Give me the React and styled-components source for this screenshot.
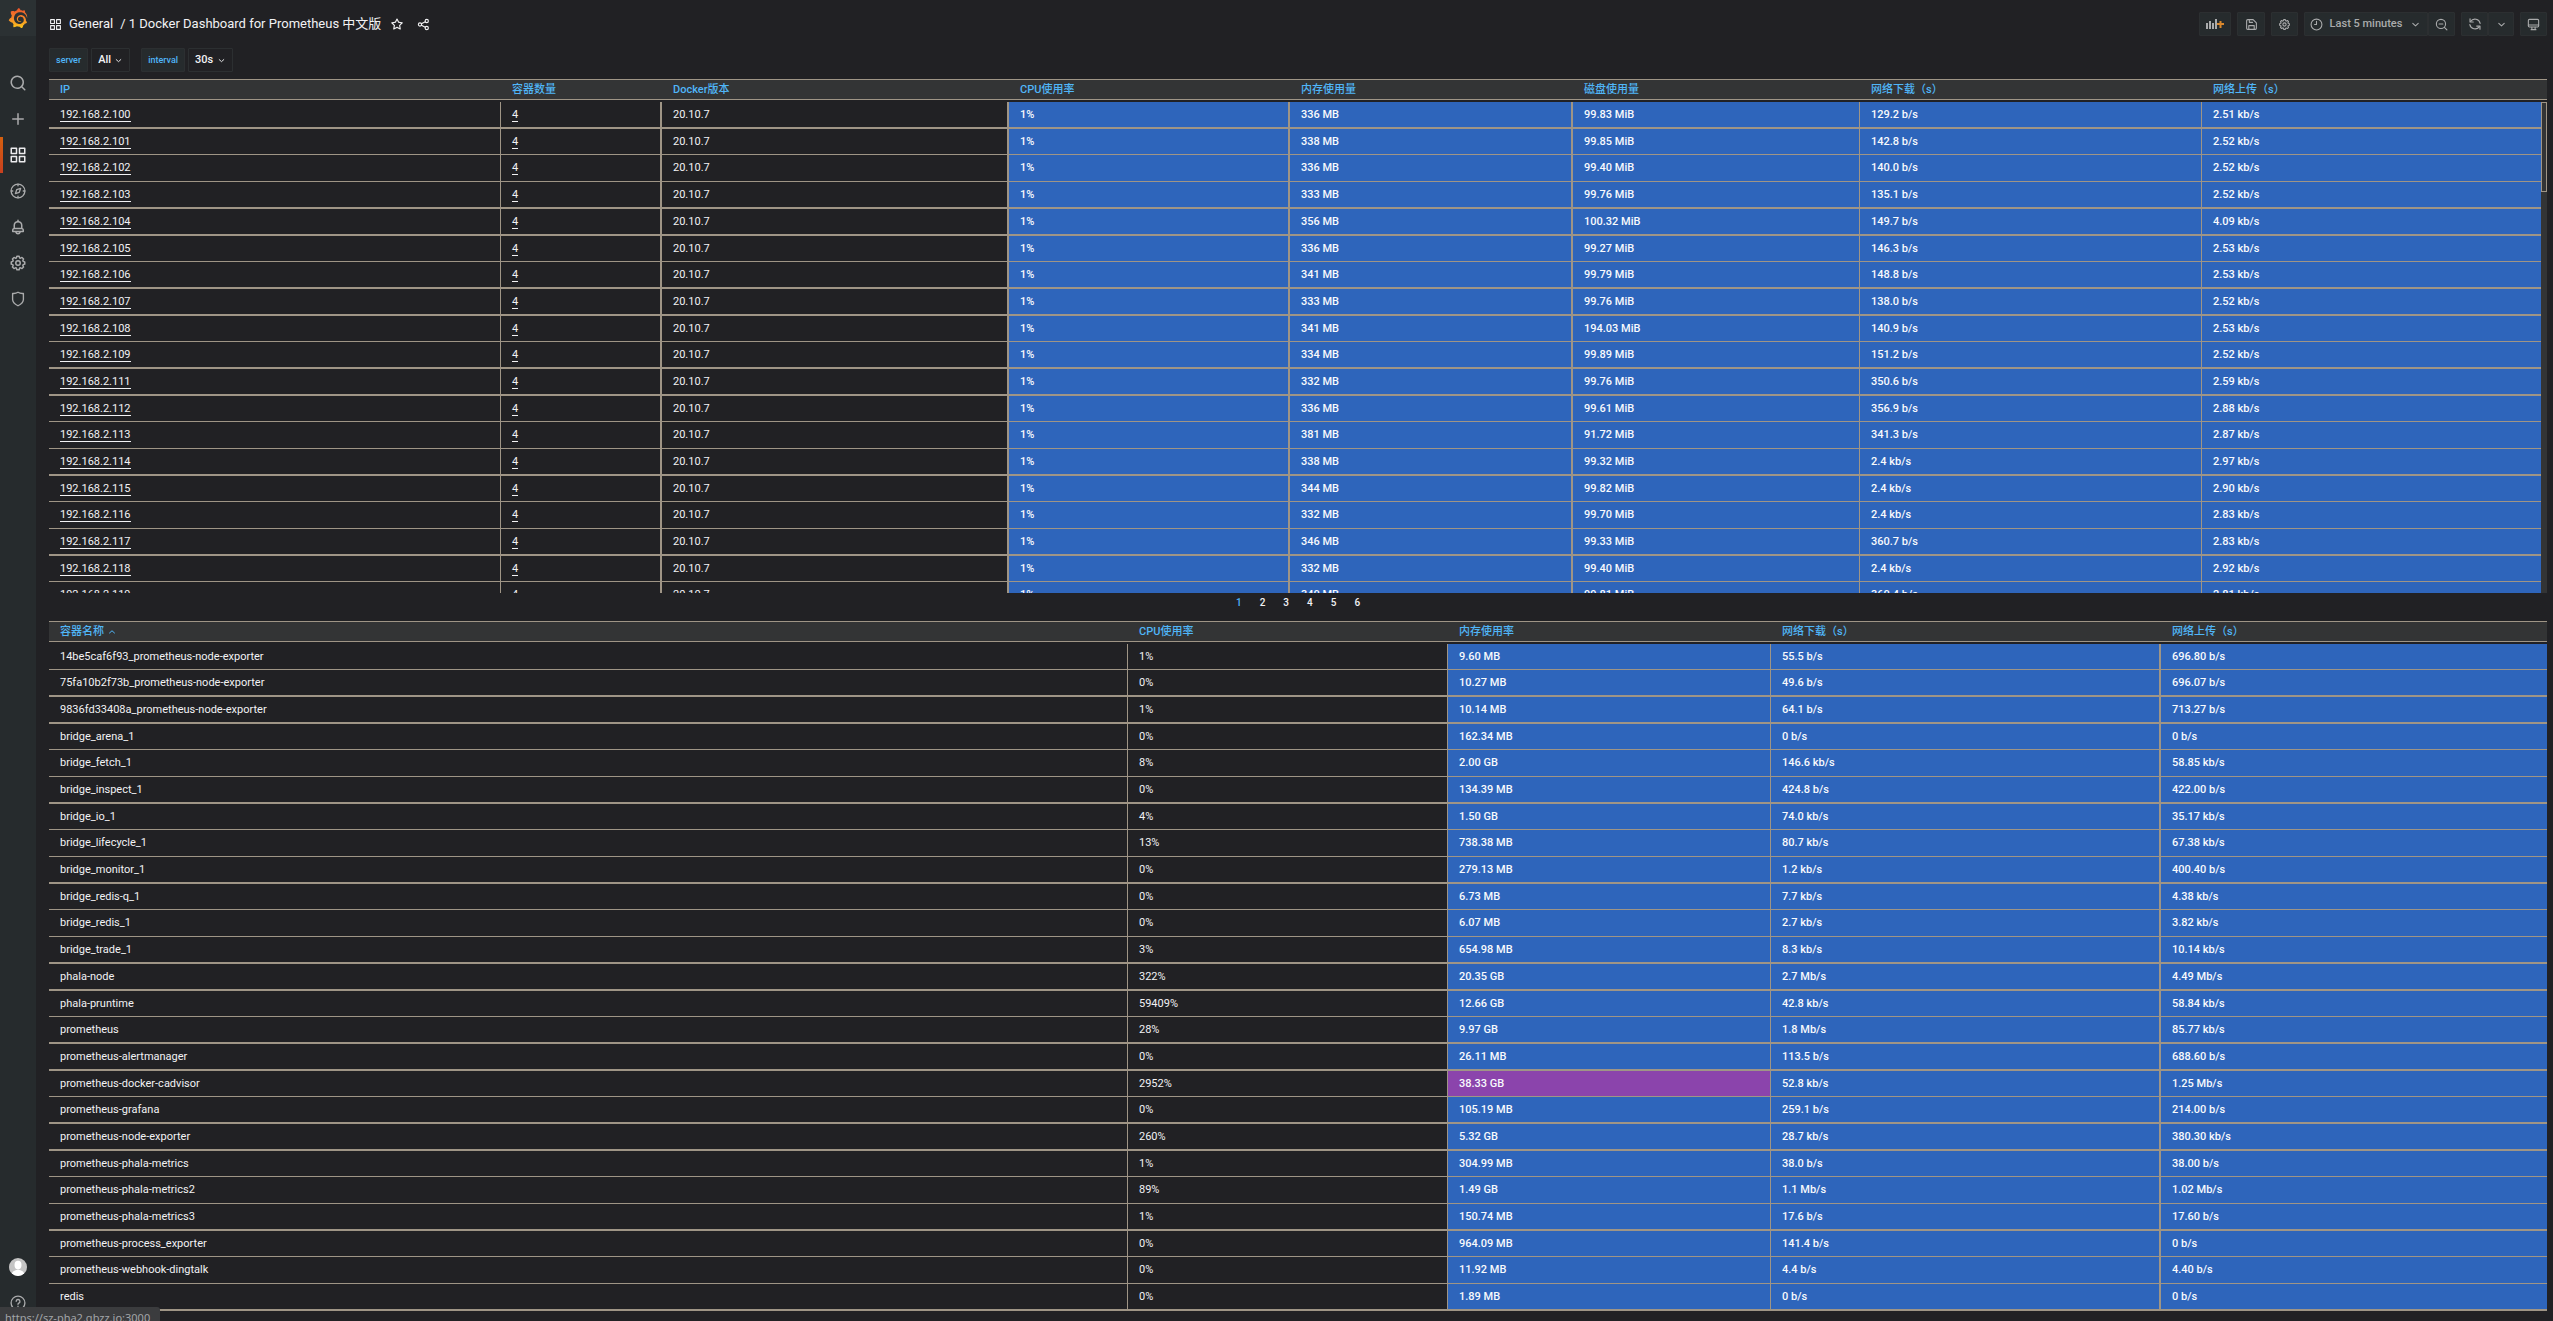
import React from "react";
import styled, { createGlobalStyle, css } from "styled-components";
import { SiGrafana } from "react-icons/si";

const color = {
  page: "#212124",
  side: "#262b2d",
  sideTop: "#2b3133",
  head: "#333435",
  line: "#9f9586",
  blue: "#2e65bb",
  purple: "#8b44ac",
  link: "#50b6f8",
  text: "#f2f2f4",
  icon: "#aaabac",
  edge: "#2c2f31",
};

const GlobalStyle = createGlobalStyle`
  * { box-sizing: border-box; }
  body {
    margin: 0;
    overflow: hidden;
    background: ${color.page};
    color: ${color.text};
    font: 500 11px/16px Roboto, "Noto Sans CJK SC", sans-serif;
  }
  button, select {
    font: inherit;
    color: inherit;
    margin: 0;
    padding: 0;
    border: 0;
    background: none;
  }
  a { color: inherit; text-decoration: none; }
`;

/* ---------- icons ---------- */

const Glyph = styled.svg`
  display: block;
  flex: none;
  width: ${(p) => p.$size || 16}px;
  height: ${(p) => p.$size || 16}px;
`;

const paths = {
  apps: "M10,13H3a1,1,0,0,0-1,1v7a1,1,0,0,0,1,1h7a1,1,0,0,0,1-1V14A1,1,0,0,0,10,13ZM9,20H4V15H9ZM21,2H14a1,1,0,0,0-1,1v7a1,1,0,0,0,1,1h7a1,1,0,0,0,1-1V3A1,1,0,0,0,21,2ZM20,9H15V4h5Zm1,4H14a1,1,0,0,0-1,1v7a1,1,0,0,0,1,1h7a1,1,0,0,0,1-1V14A1,1,0,0,0,21,13Zm-1,7H15V15h5ZM10,2H3A1,1,0,0,0,2,3v7a1,1,0,0,0,1,1h7a1,1,0,0,0,1-1V3A1,1,0,0,0,10,2ZM9,9H4V4H9Z",
  search:
    "M21.71,20.29,18,16.61A9,9,0,1,0,16.61,18l3.68,3.68a1,1,0,0,0,1.42,0A1,1,0,0,0,21.71,20.29ZM11,18a7,7,0,1,1,7-7A7,7,0,0,1,11,18Z",
  plus: "M19,11H13V5a1,1,0,0,0-2,0v6H5a1,1,0,0,0,0,2h6v6a1,1,0,0,0,2,0V13h6a1,1,0,0,0,0-2Z",
  bell: "M18,13.18V10a6,6,0,0,0-5-5.91V3a1,1,0,0,0-2,0V4.09A6,6,0,0,0,6,10v3.18A3,3,0,0,0,4,16v2a1,1,0,0,0,1,1H8.14a4,4,0,0,0,7.72,0H19a1,1,0,0,0,1-1V16A3,3,0,0,0,18,13.18ZM8,10a4,4,0,0,1,8,0v3H8Zm4,10a2,2,0,0,1-1.72-1h3.44A2,2,0,0,1,12,20Zm6-3H6V16a1,1,0,0,1,1-1H17a1,1,0,0,1,1,1Z",
  cog: "M21.32,9.55l-1.89-.63.89-1.78A1,1,0,0,0,20.13,6L18,3.87a1,1,0,0,0-1.15-.19l-1.78.89-.63-1.89A1,1,0,0,0,13.5,2h-3a1,1,0,0,0-.95.68L8.92,4.57,7.14,3.68A1,1,0,0,0,6,3.87L3.87,6a1,1,0,0,0-.19,1.15l.89,1.78-1.89.63A1,1,0,0,0,2,10.5v3a1,1,0,0,0,.68.95l1.89.63-.89,1.78A1,1,0,0,0,3.87,18L6,20.13a1,1,0,0,0,1.15.19l1.78-.89.63,1.89a1,1,0,0,0,.95.68h3a1,1,0,0,0,.95-.68l.63-1.89,1.78.89A1,1,0,0,0,18,20.13L20.13,18a1,1,0,0,0,.19-1.15l-.89-1.78,1.89-.63A1,1,0,0,0,22,13.5v-3A1,1,0,0,0,21.32,9.55ZM20,12.78l-1.2.4A2,2,0,0,0,17.64,16l.57,1.14-1.1,1.1L16,17.64a2,2,0,0,0-2.79,1.16l-.4,1.2H11.22l-.4-1.2A2,2,0,0,0,8,17.64l-1.14.57-1.1-1.1L6.36,16A2,2,0,0,0,5.2,13.18L4,12.78V11.22l1.2-.4A2,2,0,0,0,6.36,8L5.79,6.89l1.1-1.1L8,6.36A2,2,0,0,0,10.82,5.2l.4-1.2h1.56l.4,1.2A2,2,0,0,0,16,6.36l1.14-.57,1.1,1.1L17.64,8a2,2,0,0,0,1.16,2.79l1.2.4ZM12,8a4,4,0,1,0,4,4A4,4,0,0,0,12,8Zm0,6a2,2,0,1,1,2-2A2,2,0,0,1,12,14Z",
  star: "M22,9.67A1,1,0,0,0,21.14,9l-5.69-.83L12.9,3a1,1,0,0,0-1.8,0L8.55,8.16,2.86,9a1,1,0,0,0-.81.68,1,1,0,0,0,.25,1l4.13,4-1,5.68A1,1,0,0,0,6.9,21.44L12,18.77l5.1,2.67a.93.93,0,0,0,.46.12,1,1,0,0,0,.59-.19,1,1,0,0,0,.4-1l-1-5.68,4.13-4A1,1,0,0,0,22,9.67Zm-6.15,4a1,1,0,0,0-.29.88l.72,4.2-3.76-2a1.06,1.06,0,0,0-.94,0l-3.76,2,.72-4.2a1,1,0,0,0-.29-.88l-3-3,4.21-.61a1,1,0,0,0,.76-.55L12,5.7l1.88,3.82a1,1,0,0,0,.76.55l4.21.61Z",
};

const drawings = {
  compass: (
    <>
      <circle cx="12" cy="12" r="9.200" />
      <path d="M12 3v2M12 19v2M3 12h2M19 12h2" />
      <path d="M15.500 8.500l-1.800 5.200-5.200 1.800 1.800-5.200z" />
    </>
  ),
  shield: <path d="M12 3c2.500 1.500 4.500 1.900 7.200 1.500v8c0 3.700-3.200 6.300-7.200 8.500-4-2.200-7.200-4.800-7.200-8.500v-8C7.500 4.900 9.500 4.500 12 3z" />,
  help: (
    <>
      <circle cx="12" cy="12" r="9.200" />
      <path d="M9.600 9.800a2.500 2.500 0 1 1 3.600 2.300c-.8.400-1.200.8-1.200 1.700M12 16.300v.5" />
    </>
  ),
  share: (
    <>
      <circle cx="5.500" cy="12" r="3" />
      <circle cx="18" cy="5.500" r="3" />
      <circle cx="18" cy="18.500" r="3" />
      <path d="M8.200 10.700l7-3.700M8.200 13.300l7 3.800" />
    </>
  ),
  save: (
    <>
      <path d="M3 5a2 2 0 0 1 2-2h10l6 6v10a2 2 0 0 1-2 2H5a2 2 0 0 1-2-2z" />
      <path d="M8 3v5h6M7 21v-7h10v7" />
    </>
  ),
  clock: (
    <>
      <circle cx="12" cy="12" r="10" />
      <path d="M12 6v6H8.500" />
    </>
  ),
  zoomOut: (
    <>
      <circle cx="11" cy="11" r="8.500" />
      <path d="M7.500 11h7M17.300 17.300L22 22" />
    </>
  ),
  sync: (
    <>
      <path d="M3.500 3v5.500H9M20.500 21v-5.500H15" />
      <path d="M20.800 11A9 9 0 0 0 4.500 7.500M3.200 13a9 9 0 0 0 16.300 3.500" />
    </>
  ),
  monitor: (
    <>
      <rect x="2.500" y="2.500" width="19" height="14" rx="2" />
      <path d="M2.500 13h19M7.500 21.500h9M9 17v4M15 17v4" />
    </>
  ),
  down: <path d="M7 10l5 4.500L17 10" />,
  up: <path d="M7 14l5-4.500L17 14" />,
};

function Icon({ name, size, weight = 2 }) {
  if (paths[name]) {
    return (
      <Glyph $size={size} viewBox="0 0 24 24" fill="currentColor" aria-hidden="true">
        <path d={paths[name]} />
      </Glyph>
    );
  }
  return (
    <Glyph
      $size={size}
      viewBox="0 0 24 24"
      fill="none"
      stroke="currentColor"
      strokeWidth={weight}
      strokeLinecap="round"
      strokeLinejoin="round"
      aria-hidden="true"
    >
      {drawings[name]}
    </Glyph>
  );
}

function AddPanelIcon() {
  return (
    <svg width="20" height="14" viewBox="0 0 20 14" aria-hidden="true">
      <g fill={color.icon}>
        <rect x="1" y="6" width="2" height="6" />
        <rect x="4" y="4" width="2" height="8" />
        <rect x="7" y="6" width="2" height="6" />
        <rect x="10" y="2" width="2" height="10" />
      </g>
      <path d="M12 7h7M15.500 4v7" stroke="#d8872c" strokeWidth="2" />
    </svg>
  );
}

/* ---------- side menu ---------- */

const Shell = styled.div`
  display: flex;
  height: 100vh;
`;

const Side = styled.nav`
  display: flex;
  flex-direction: column;
  flex: none;
  width: 36px;
  background: ${color.side};
`;

const Logo = styled.a`
  display: grid;
  place-items: center;
  height: 36px;
  margin-bottom: 29px;
  background: ${color.sideTop};
  svg {
    fill: url(#flame);
  }
`;

const SideLink = styled.a`
  display: grid;
  place-items: center;
  height: 36px;
  color: ${(p) => (p.$active ? "#ececee" : color.icon)};
  ${(p) =>
    p.$active &&
    css`
      background: linear-gradient(#d4600f, #c8401f) left / 3px 100% no-repeat;
    `}
`;

const Spacer = styled.div`
  flex: 1;
`;

const Avatar = styled.svg`
  display: block;
  width: 18px;
  height: 18px;
  border-radius: 50%;
`;

/* ---------- page header ---------- */

const Main = styled.main`
  flex: 1;
  min-width: 0;
  padding: 0 6px 0 13px;
`;

const TopBar = styled.header`
  display: flex;
  align-items: center;
  height: 48px;
`;

const Title = styled.h1`
  display: flex;
  align-items: center;
  gap: 7px;
  margin: 0;
  font-size: 13px;
  line-height: 20px;
  font-weight: 400;
`;

const TitleActions = styled.div`
  display: flex;
  gap: 13px;
  margin-left: 9px;
`;

const Tools = styled.div`
  display: flex;
  gap: 6px;
  margin-left: auto;
`;

const ToolGroup = styled.div`
  display: flex;
`;

const Tool = styled.button`
  display: flex;
  align-items: center;
  justify-content: center;
  gap: 7px;
  height: 24px;
  width: ${(p) => p.$width || 27}px;
  background: ${color.side};
  border: 1px solid ${color.edge};
  border-radius: 1px;
  color: ${color.icon};
`;

const Variables = styled.div`
  display: flex;
  gap: 11px;
  height: 24px;
  margin: 0 0 7px;
`;

const Variable = styled.div`
  display: flex;
  gap: 3px;
`;

const VariableLabel = styled.label`
  padding: 0 6px;
  background: ${color.side};
  border: 1px solid ${color.edge};
  border-radius: 1px;
  color: ${color.link};
  font-size: 9px;
  line-height: 22px;
`;

const SelectBox = styled.div`
  display: grid;
  align-items: center;
  border: 1px solid ${color.edge};
  border-radius: 1px;
  > * {
    grid-area: 1 / 1;
  }
  svg {
    justify-self: end;
    margin-right: 5px;
    pointer-events: none;
  }
`;

const Select = styled.select`
  appearance: none;
  height: 22px;
  padding: 0 18px 0 6px;
  cursor: pointer;
`;

/* ---------- tables ---------- */

const Panel = styled.section`
  position: relative;
`;

const Table = styled.table`
  display: block;
  width: 100%;
`;

const Head = styled.thead`
  display: block;
  margin-bottom: 2px;
  background: ${color.head};
  border: solid ${color.line};
  border-width: 1px 0;
`;

const HeadRow = styled.tr`
  display: grid;
  grid-template-columns: ${(p) => p.$columns};
`;

const HeadCell = styled.th`
  display: flex;
  align-items: center;
  gap: 2px;
  height: 19px;
  padding: 0 11px;
  overflow: hidden;
  color: ${color.link};
  font-weight: 500;
  text-align: left;
  white-space: nowrap;
`;

const Body = styled.tbody`
  display: block;
  ${(p) =>
    p.$clip &&
    css`
      height: 491px;
      padding-right: 6px;
      overflow: hidden;
    `}
`;

const Row = styled.tr`
  display: grid;
  grid-template-columns: ${(p) => p.$columns};
  height: ${(p) => (p.$short ? 26 : 27)}px;
  border-bottom: ${(p) => (p.$strong ? 2 : 1)}px solid ${color.line};
`;

const Cell = styled.td`
  padding: 0 11px;
  line-height: 25px;
  overflow: hidden;
  white-space: nowrap;
  background: ${(p) => p.$fill || "transparent"};
  color: ${(p) => (p.$fill ? "#f8fafd" : color.text)};
  font-weight: ${(p) => (p.$fill ? 500 : 400)};
  border-right: ${(p) => p.$rule}px solid ${color.line};
`;

const CellLink = styled.a`
  border-bottom: 1px solid ${color.text};
`;

const Rail = styled.div`
  position: absolute;
  top: 23px;
  right: 0;
  bottom: 0;
  width: 6px;
  background: ${color.head};
`;

const Thumb = styled.div`
  height: 90px;
  border: 1px solid ${color.line};
  background: ${color.head};
`;

const Pager = styled.nav`
  display: flex;
  justify-content: center;
  height: 28px;
`;

const PageButton = styled.button`
  height: 20px;
  padding: 0 9px;
  font-size: 10px;
  color: ${(p) => (p.$active ? color.link : color.text)};
`;

const StatusBubble = styled.div`
  position: fixed;
  left: 0;
  bottom: -8px;
  height: 22px;
  padding: 0 10px 0 5px;
  background: #3b3c3e;
  border-radius: 0 3px 0 0;
  color: #a2a5a8;
  font: 11px/22px "Noto Sans", sans-serif;
`;

/* ---------- data ---------- */

const hosts = `100|336|99.83|129.2 b/s|2.51
101|338|99.85|142.8 b/s|2.52
102|336|99.40|140.0 b/s|2.52
103|333|99.76|135.1 b/s|2.52
104|356|100.32|149.7 b/s|4.09
105|336|99.27|146.3 b/s|2.53
106|341|99.79|148.8 b/s|2.53
107|333|99.76|138.0 b/s|2.52
108|341|194.03|140.9 b/s|2.53
109|334|99.89|151.2 b/s|2.52
111|332|99.76|350.6 b/s|2.59
112|336|99.61|356.9 b/s|2.88
113|381|91.72|341.3 b/s|2.87
114|338|99.32|2.4 kb/s|2.97
115|344|99.82|2.4 kb/s|2.90
116|332|99.70|2.4 kb/s|2.83
117|346|99.33|360.7 b/s|2.83
118|332|99.40|2.4 kb/s|2.92
119|340|99.81|360.4 b/s|2.81`
  .split("\n")
  .map((line) => {
    const [ip, memory, disk, down, up] = line.split("|");
    return [`192.168.2.${ip}`, "4", "20.10.7", "1%", `${memory} MB`, `${disk} MiB`, down, `${up} kb/s`];
  });

const containers = `14be5caf6f93_prometheus-node-exporter|1%|9.60 MB|55.5 b/s|696.80 b/s
75fa10b2f73b_prometheus-node-exporter|0%|10.27 MB|49.6 b/s|696.07 b/s
9836fd33408a_prometheus-node-exporter|1%|10.14 MB|64.1 b/s|713.27 b/s
bridge_arena_1|0%|162.34 MB|0 b/s|0 b/s
bridge_fetch_1|8%|2.00 GB|146.6 kb/s|58.85 kb/s
bridge_inspect_1|0%|134.39 MB|424.8 b/s|422.00 b/s
bridge_io_1|4%|1.50 GB|74.0 kb/s|35.17 kb/s
bridge_lifecycle_1|13%|738.38 MB|80.7 kb/s|67.38 kb/s
bridge_monitor_1|0%|279.13 MB|1.2 kb/s|400.40 b/s
bridge_redis-q_1|0%|6.73 MB|7.7 kb/s|4.38 kb/s
bridge_redis_1|0%|6.07 MB|2.7 kb/s|3.82 kb/s
bridge_trade_1|3%|654.98 MB|8.3 kb/s|10.14 kb/s
phala-node|322%|20.35 GB|2.7 Mb/s|4.49 Mb/s
phala-pruntime|59409%|12.66 GB|42.8 kb/s|58.84 kb/s
prometheus|28%|9.97 GB|1.8 Mb/s|85.77 kb/s
prometheus-alertmanager|0%|26.11 MB|113.5 b/s|688.60 b/s
prometheus-docker-cadvisor|2952%|38.33 GB|52.8 kb/s|1.25 Mb/s
prometheus-grafana|0%|105.19 MB|259.1 b/s|214.00 b/s
prometheus-node-exporter|260%|5.32 GB|28.7 kb/s|380.30 kb/s
prometheus-phala-metrics|1%|304.99 MB|38.0 b/s|38.00 b/s
prometheus-phala-metrics2|89%|1.49 GB|1.1 Mb/s|1.02 Mb/s
prometheus-phala-metrics3|1%|150.74 MB|17.6 b/s|17.60 b/s
prometheus-process_exporter|0%|964.09 MB|141.4 b/s|0 b/s
prometheus-webhook-dingtalk|0%|11.92 MB|4.4 b/s|4.40 b/s
redis|0%|1.89 MB|0 b/s|0 b/s`
  .split("\n")
  .map((line) => line.split("|"));

const hostTable = {
  heads: ["IP", "容器数量", "Docker版本", "CPU使用率", "内存使用量", "磁盘使用量", "网络下载（s）", "网络上传（s）"],
  headColumns: "452fr 161fr 347fr 281fr 283fr 287fr 342fr 345fr",
  columns: "452fr 161fr 347fr 281fr 283fr 287fr 342fr 339fr",
  rules: [1, 2, 2, 2, 2, 1, 1, 0],
  rows: hosts,
  links: 2,
  fillFrom: 3,
  short: [2, 6, 9, 12, 15, 18],
  strong: [1, 4, 5, 7, 8, 10, 11, 14, 17],
  clip: true,
};

const containerTable = {
  heads: ["容器名称", "CPU使用率", "内存使用率", "网络下载（s）", "网络上传（s）"],
  headColumns: "1079fr 320fr 323fr 390fr 386fr",
  columns: "1079fr 320fr 323fr 390fr 386fr",
  rules: [1, 1, 1, 2, 0],
  rows: containers,
  links: 0,
  fillFrom: 2,
  short: [1, 4, 7, 10, 14, 17, 20, 23],
  strong: [2, 3, 6, 9, 12, 13, 15, 16, 18, 19, 22, 25],
  sorted: 0,
};

function fillFor(table, index, value) {
  if (index < table.fillFrom) return null;
  const [amount, unit] = value.split(" ");
  return unit === "GB" && Number(amount) > 32 ? color.purple : color.blue;
}

function DataTable({ table }) {
  return (
    <Panel>
      <Table>
        <Head>
          <HeadRow $columns={table.headColumns}>
            {table.heads.map((head, i) => (
              <HeadCell key={i} scope="col">
                {head}
                {table.sorted === i && <Icon name="up" size={12} />}
              </HeadCell>
            ))}
          </HeadRow>
        </Head>
        <Body $clip={table.clip}>
          {table.rows.map((row, r) => (
            <Row
              key={row[0]}
              $columns={table.columns}
              $short={table.short.includes(r + 1)}
              $strong={table.strong.includes(r + 1)}
            >
              {row.map((value, i) => (
                <Cell key={i} $fill={fillFor(table, i, value)} $rule={table.rules[i]}>
                  {i < table.links ? <CellLink href="#">{value}</CellLink> : value}
                </Cell>
              ))}
            </Row>
          ))}
        </Body>
      </Table>
      {table.clip && (
        <Rail>
          <Thumb />
        </Rail>
      )}
    </Panel>
  );
}

const menu = [
  ["search", "Search"],
  ["plus", "Create"],
  ["apps", "Dashboards"],
  ["compass", "Explore"],
  ["bell", "Alerting"],
  ["cog", "Configuration"],
  ["shield", "Server admin"],
];

export default function App() {
  return (
    <>
      <GlobalStyle />
      <Shell>
        <Side>
          <Logo href="#" aria-label="Home">
            <svg width="0" height="0" style={{ position: "absolute" }} aria-hidden="true">
              <linearGradient id="flame" x1="0" y1="0" x2="0" y2="1">
                <stop offset="0" stopColor="#ee5329" />
                <stop offset="0.5" stopColor="#f3842a" />
                <stop offset="1" stopColor="#fbc61b" />
              </linearGradient>
            </svg>
            <SiGrafana size={20} />
          </Logo>
          {menu.map(([name, label]) => (
            <SideLink key={name} href="#" aria-label={label} $active={name === "apps"}>
              <Icon name={name} size={18} weight={1.8} />
            </SideLink>
          ))}
          <Spacer />
          <SideLink href="#" aria-label="Profile">
            <Avatar viewBox="0 0 18 18" aria-hidden="true">
              <rect width="18" height="18" fill="#c4c4c4" />
              <ellipse cx="9" cy="7" rx="3.500" ry="4.200" fill="#fff" />
              <path d="M2.500 18c0-4.500 2.500-5.500 6.500-6.500 4 1 6.500 2 6.500 6.500z" fill="#fff" />
            </Avatar>
          </SideLink>
          <SideLink href="#" aria-label="Help">
            <Icon name="help" size={18} weight={1.8} />
          </SideLink>
        </Side>

        <Main>
          <TopBar>
            <Title>
              <Icon name="apps" size={13} />
              <a href="#">General</a>
              <a href="#">/ 1 Docker Dashboard for Prometheus 中文版</a>
            </Title>
            <TitleActions>
              <button aria-label="Mark as favorite">
                <Icon name="star" size={14} />
              </button>
              <button aria-label="Share dashboard">
                <Icon name="share" size={13} />
              </button>
            </TitleActions>
            <Tools>
              <Tool $width={32} aria-label="Add panel">
                <AddPanelIcon />
              </Tool>
              <Tool $width={28} aria-label="Save dashboard">
                <Icon name="save" size={13} />
              </Tool>
              <Tool aria-label="Dashboard settings">
                <Icon name="cog" size={13} />
              </Tool>
              <ToolGroup>
                <Tool $width={124}>
                  <Icon name="clock" size={13} />
                  Last 5 minutes
                  <Icon name="down" size={13} />
                </Tool>
                <Tool aria-label="Zoom out">
                  <Icon name="zoomOut" size={13} />
                </Tool>
              </ToolGroup>
              <ToolGroup>
                <Tool aria-label="Refresh">
                  <Icon name="sync" size={14} />
                </Tool>
                <Tool $width={26} aria-label="Refresh interval">
                  <Icon name="down" size={13} />
                </Tool>
              </ToolGroup>
              <Tool aria-label="Cycle view mode">
                <Icon name="monitor" size={13} />
              </Tool>
            </Tools>
          </TopBar>

          <Variables>
            <Variable>
              <VariableLabel htmlFor="server">server</VariableLabel>
              <SelectBox>
                <Select id="server" defaultValue="All">
                  <option>All</option>
                </Select>
                <Icon name="down" size={11} />
              </SelectBox>
            </Variable>
            <Variable>
              <VariableLabel htmlFor="interval">interval</VariableLabel>
              <SelectBox>
                <Select id="interval" defaultValue="30s">
                  <option>30s</option>
                </Select>
                <Icon name="down" size={11} />
              </SelectBox>
            </Variable>
          </Variables>

          <DataTable table={hostTable} />
          <Pager aria-label="Table pages">
            {[1, 2, 3, 4, 5, 6].map((n) => (
              <PageButton key={n} $active={n === 1}>
                {n}
              </PageButton>
            ))}
          </Pager>
          <DataTable table={containerTable} />
        </Main>
      </Shell>
      <StatusBubble>https://sz-pha2.gbzz.io:3000</StatusBubble>
    </>
  );
}
